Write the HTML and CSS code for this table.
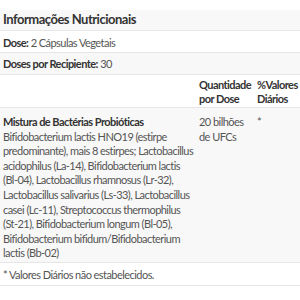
FILE: index.html
```html
<!DOCTYPE html>
<html lang="pt-BR">
<head>
<meta charset="utf-8">
<link rel="stylesheet" href="styles.css">
</head>
<body>
<div class="panel">
  <table class="facts">
    <colgroup>
      <col class="c1"><col class="c2"><col class="c3">
    </colgroup>
    <tr class="title grey"><th colspan="3">Informações Nutricionais</th></tr>
    <tr class="info"><td colspan="3"><b>Dose:</b> 2 Cápsulas Vegetais</td></tr>
    <tr class="info grey"><td colspan="3"><b>Doses por Recipiente:</b> 30</td></tr>
    <tr class="head"><td></td><td><b>Quantidade por Dose</b></td><td><b>%Valores Diários</b></td></tr>
    <tr class="body grey">
      <td><b>Mistura de Bactérias Probióticas</b><br>Bifidobacterium lactis HNO19 (estirpe predominante), mais 8 estirpes; Lactobacillus acidophilus (La-14), Bifidobacterium lactis (Bl-04), Lactobacillus rhamnosus (Lr-32), Lactobacillus salivarius (Ls-33), Lactobacillus casei (Lc-11), Streptococcus thermophilus (St-21), Bifidobacterium longum (Bl-05), Bifidobacterium bifidum/Bifidobacterium lactis (Bb-02)</td>
      <td>20 bilhões de UFCs</td>
      <td>*</td>
    </tr>
    <tr class="foot"><td colspan="3">* Valores Diários não estabelecidos.</td></tr>
  </table>
</div>
</body>
</html>
```
FILE: styles.css
```css
html, body {
  margin: 0;
  padding: 0;
  background: #fff;
}
.panel {
  padding-top: 10px;
  width: 300px;
}
.facts {
  width: 300px;
  border-collapse: collapse;
  table-layout: fixed;
  font-family: Lato, "Liberation Sans", sans-serif;
  font-size: 11px;
  line-height: 14.6px;
  letter-spacing: -0.55px;
  color: #555;
}
.c1 { width: 196px; }
.c2 { width: 58px; }
.c3 { width: 46px; }
.facts tr {
  border-bottom: 1px solid #e6e6e6;
}
.grey { background: #f8f8f8; }
.facts td, .facts th {
  padding: 0 0 0 3px;
  vertical-align: top;
  text-align: left;
}
.facts b { color: #333; font-weight: 700; }
.title th {
  font-size: 13px;
  line-height: 16px;
  letter-spacing: -0.5px;
  font-weight: 700;
  color: #333;
  padding-top: 1px;
  padding-bottom: 3px;
}
.info td { padding-top: 4.5px; padding-bottom: 1.9px; }
.head td { padding-top: 2.8px; padding-bottom: 0; }
.body td { padding-top: 7px; padding-bottom: 1px; }
.foot td { padding-top: 5.5px; padding-bottom: 1.9px; }
```
